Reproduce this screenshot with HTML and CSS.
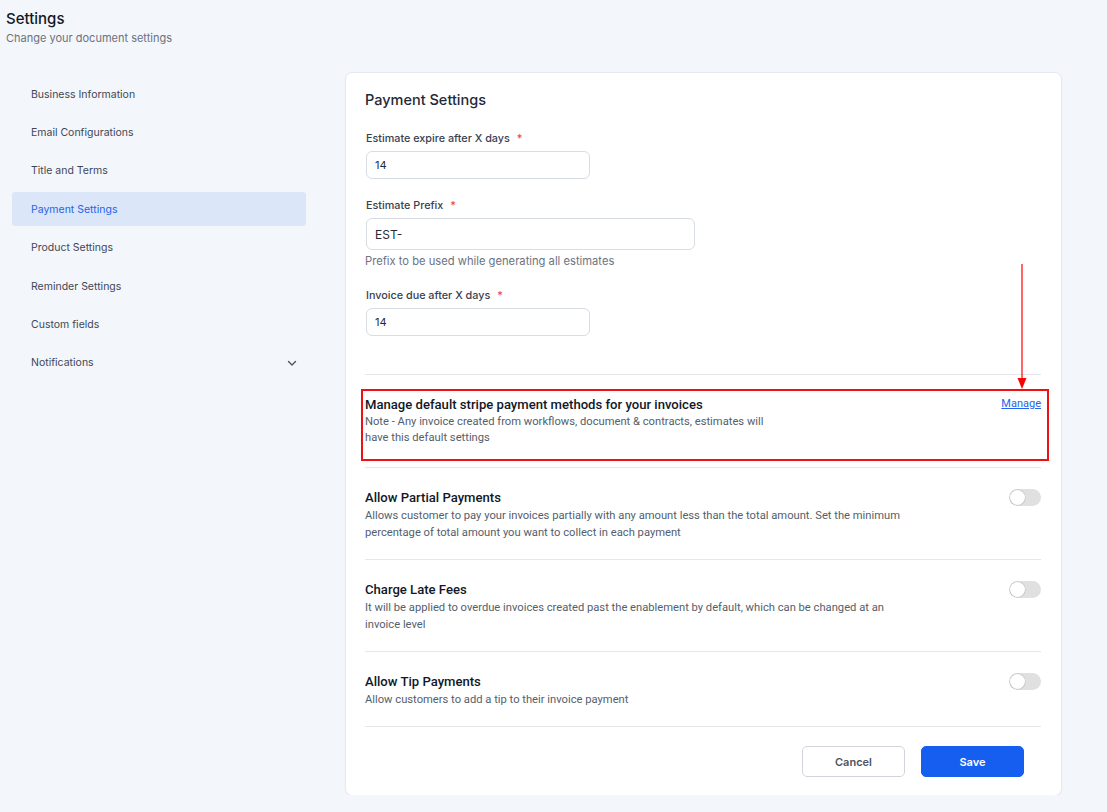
FILE: index.html
```html
<!DOCTYPE html>
<html lang="en">

<head>
    <meta charset="UTF-8">
    <meta name="viewport" content="width=device-width, initial-scale=1.0">
    <title>Settings</title>
    <link rel="stylesheet" href="styles.css">
</head>

<body>

    <div class="page-header">
        <h1 class="page-title">Settings</h1>
        <p class="page-subtitle">Change your document settings</p>
    </div>

    <div class="layout">
        <ul class="side-nav">
            <li class="nav-item">Business Information</li>
            <li class="nav-item">Email Configurations</li>
            <li class="nav-item">Title and Terms</li>
            <li class="nav-item active">Payment Settings</li>
            <li class="nav-item">Product Settings</li>
            <li class="nav-item">Reminder Settings</li>
            <li class="nav-item">Custom fields</li>
            <li class="nav-item">
                Notifications
                <svg class="chevron" width="12" height="12" viewBox="0 0 12 12">
                    <path d="M2.5 4.5 L6 8 L9.5 4.5" fill="none" stroke="#4b5563" stroke-width="1.4" stroke-linecap="round" stroke-linejoin="round" />
                </svg>
            </li>
        </ul>

        <div class="card">
            <h2 class="card-title">Payment Settings</h2>

            <div class="field">
                <label class="field-label">Estimate expire after X days <span class="req">*</span></label>
                <input class="field-input small" type="text" value="14">
            </div>

            <div class="field">
                <label class="field-label">Estimate Prefix <span class="req">*</span></label>
                <input class="field-input wide" type="text" value="EST-">
                <p class="field-help">Prefix to be used while generating all estimates</p>
            </div>

            <div class="field">
                <label class="field-label">Invoice due after X days <span class="req">*</span></label>
                <input class="field-input small" type="text" value="14">
            </div>

            <div class="option highlighted">
                <div class="option-text">
                    <h3 class="option-title">Manage default stripe payment methods for your invoices</h3>
                    <p class="option-desc narrow">Note - Any invoice created from workflows, document &amp; contracts, estimates will have this default settings</p>
                </div>
                <a class="manage-link" href="#">Manage</a>
                <svg class="arrow" width="12" height="126" viewBox="0 0 12 126">
                    <line x1="6" y1="0" x2="6" y2="116" stroke="#ff0000" stroke-width="1.2" />
                    <polygon points="1.5,114 10.5,114 6,125" fill="#ff0000" />
                </svg>
            </div>

            <div class="option">
                <div class="option-text">
                    <h3 class="option-title">Allow Partial Payments</h3>
                    <p class="option-desc">Allows customer to pay your invoices partially with any amount less than the total amount. Set the minimum percentage of total amount you want to collect in each payment</p>
                </div>
                <span class="toggle"></span>
            </div>

            <div class="option">
                <div class="option-text">
                    <h3 class="option-title">Charge Late Fees</h3>
                    <p class="option-desc">It will be applied to overdue invoices created past the enablement by default, which can be changed at an invoice level</p>
                </div>
                <span class="toggle"></span>
            </div>

            <div class="option">
                <div class="option-text">
                    <h3 class="option-title">Allow Tip Payments</h3>
                    <p class="option-desc">Allow customers to add a tip to their invoice payment</p>
                </div>
                <span class="toggle"></span>
            </div>

            <div class="card-footer">
                <button class="btn btn-cancel">Cancel</button>
                <button class="btn btn-save">Save</button>
            </div>
        </div>
    </div>

</body>

</html>
```

FILE: styles.css
```css
body {
    margin: 0;
    background-color: #f3f6fa;
    font-family: Inter, "Noto Sans", sans-serif;
    color: #111827;
}

.page-header {
    padding: 9px 6px 0;
}

.page-title {
    margin: 0;
    font-size: 15px;
    line-height: 20px;
    font-weight: 500;
}

.page-subtitle {
    margin: 0;
    font-size: 11px;
    line-height: 18px;
    color: #6b7280;
}

.layout {
    display: flex;
    align-items: flex-start;
    margin-top: 26px;
}

.side-nav {
    list-style: none;
    margin: 4px 0 0 12px;
    padding: 0;
    width: 294px;
    display: flex;
    flex-direction: column;
    gap: 4.43px;
}

.nav-item {
    height: 34px;
    display: flex;
    align-items: center;
    justify-content: space-between;
    padding: 0 8px 0 19px;
    font-size: 10.5px;
    color: #3f4756;
    border-radius: 3px;
}

.nav-item.active {
    background-color: #dbe7f8;
    color: #2563eb;
}

.chevron {
    display: block;
}

.card {
    margin-left: 40px;
    width: 715px;
    box-sizing: border-box;
    padding: 17px 20px 18px 19px;
    background-color: #fff;
    border-radius: 6px;
    box-shadow: 0 0 0 1px #e6eaf0, 0 1px 3px rgba(16, 24, 40, 0.08);
}

.card-title {
    margin: 0 0 21px;
    font-size: 14.5px;
    line-height: 20px;
    font-weight: 500;
    color: #1f2937;
}

.field {
    margin-bottom: 19px;
}

.field-label {
    display: block;
    margin-left: 1px;
    font-size: 10.8px;
    line-height: 16px;
    font-weight: 500;
    color: #374151;
    margin-bottom: 4px;
}

.req {
    color: #ef4444;
    margin-left: 4px;
}

.field-input {
    display: block;
    box-sizing: border-box;
    margin-left: 1px;
    border: 1px solid #d8dce3;
    border-radius: 6px;
    padding: 0 8px;
    font-family: Inter, sans-serif;
    font-size: 11px;
    color: #1f2937;
    background: #fff;
}

.field-input.small {
    width: 224px;
    height: 28px;
}

.field-input.wide {
    width: 329px;
    height: 32px;
    font-size: 12px;
}

.field-help {
    margin: 3px 0 0;
    font-size: 11.2px;
    line-height: 16px;
    color: #6b7280;
}

.field:nth-of-type(3) {
    margin-bottom: 38px;
}

.option {
    position: relative;
    display: flex;
    justify-content: space-between;
    align-items: flex-start;
    border-top: 1px solid #e5e7eb;
    padding: 21px 0 18px;
    font-family: Roboto, "Liberation Sans", Arial, sans-serif;
}

.option-title {
    margin: 0;
    font-size: 13.1px;
    line-height: 18px;
    font-weight: 500;
    color: #111827;
}

.option-desc {
    margin: 0;
    max-width: 545px;
    font-size: 11.2px;
    line-height: 17px;
    color: #555e6c;
}

.option-desc.narrow {
    max-width: 410px;
    line-height: 16px;
}

.highlighted {
    padding-bottom: 21px;
}

.highlighted::after {
    content: "";
    position: absolute;
    left: -4px;
    right: -8px;
    top: 14px;
    bottom: 6px;
    border: 2px solid #ee1111;
    pointer-events: none;
}

.manage-link {
    font-size: 11px;
    line-height: 16px;
    color: #2563eb;
    text-decoration: underline;
}

.arrow {
    position: absolute;
    right: 13px;
    top: -111px;
}

.toggle {
    position: relative;
    display: block;
    width: 32px;
    height: 17px;
    border-radius: 9px;
    background-color: #e0e0e0;
    flex-shrink: 0;
}

.toggle::before {
    content: "";
    position: absolute;
    left: 1px;
    top: 1px;
    width: 15px;
    height: 15px;
    border-radius: 50%;
    background-color: #fff;
    box-shadow: 0 0 0 0.5px #b8b8b8;
}

.card-footer {
    display: flex;
    justify-content: flex-end;
    gap: 16px;
    border-top: 1px solid #e5e7eb;
    padding: 19px 17px 0 0;
}

.btn {
    width: 103px;
    height: 31px;
    border-radius: 5px;
    font-family: Inter, sans-serif;
    font-size: 11px;
    font-weight: 600;
    cursor: pointer;
}

.btn-cancel {
    background-color: #fff;
    border: 1px solid #d1d5db;
    color: #4b5563;
}

.btn-save {
    background-color: #155eef;
    border: 1px solid #155eef;
    color: #fff;
}
```
